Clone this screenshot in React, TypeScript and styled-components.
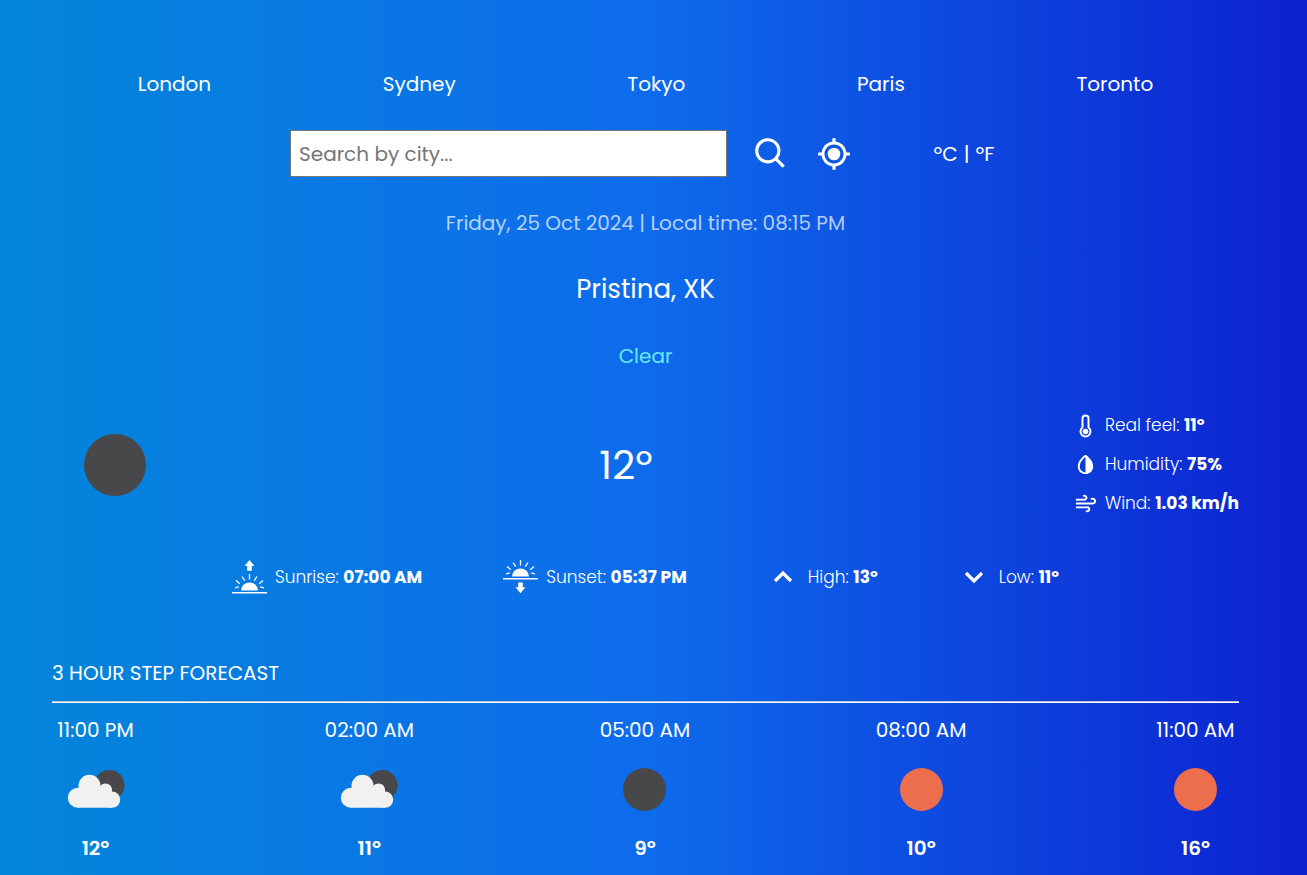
import React from "react";
import styled, { createGlobalStyle } from "styled-components";
import { BiSearch, BiCurrentLocation, BiSolidDropletHalf } from "react-icons/bi";
import { FiWind } from "react-icons/fi";

const GlobalStyle = createGlobalStyle`
  *, *::before, *::after { box-sizing: border-box; }
  html { min-height: 100%; }
  body {
    margin: 0;
    min-height: 100vh;
    background: linear-gradient(to right, #0386da, #0e6bec 50%, #0c21d0);
    color: #fff;
    font-family: Poppins, Inter, "Open Sans", sans-serif;
    font-size: 20px;
    line-height: 30px;
  }
  button, input { font: inherit; color: inherit; }
  h1, h2, p, ul { margin: 0; padding: 0; font-weight: 400; }
`;

const Page = styled.main`
  display: flex;
  flex-direction: column;
  padding: 69px 68px 12px 52px;
`;

const PlainButton = styled.button`
  display: inline-flex;
  align-items: center;
  justify-content: center;
  padding: 0;
  border: 0;
  background: none;
  cursor: pointer;
`;

const CityNav = styled.nav`
  display: flex;
  justify-content: space-around;
`;

const SearchBar = styled.form`
  display: flex;
  align-items: center;
  justify-content: center;
  margin-top: 31px;
`;

const SearchInput = styled.input`
  width: 37%;
  max-width: 437px;
  height: 47px;
  padding: 0 8px;
  border: 1px solid #767676;
  background: #fff;
  color: #222;
  &::placeholder { color: #757575; opacity: 1; }
`;

const SearchActions = styled.div`
  display: flex;
  gap: 25px;
  margin-left: 25px;
`;

const Units = styled.div`
  display: flex;
  align-items: center;
  justify-content: center;
  gap: 6px;
  width: 74px;
  margin-left: 74px;
`;

const DateLine = styled.p`
  margin-top: 31px;
  text-align: center;
  color: rgba(255, 255, 255, 0.7);
`;

const City = styled.h1`
  margin-top: 31px;
  font-size: 26px;
  line-height: 40px;
  text-align: center;
`;

const Condition = styled.p`
  margin-top: 32px;
  text-align: center;
  color: #67e8f9;
`;

const Current = styled.section`
  display: flex;
  align-items: center;
  justify-content: space-between;
  margin-top: 41px;
`;

const IconBox = styled.div`
  display: flex;
  justify-content: center;
  width: 126px;
`;

const Temperature = styled.p`
  font-size: 40px;
  line-height: 60px;
`;

const Details = styled.ul`
  display: flex;
  flex-direction: column;
  gap: 12px;
  list-style: none;
`;

const Stat = styled.li<{ $gap: number }>`
  display: flex;
  align-items: center;
  gap: ${(p) => p.$gap}px;
  font-size: 17px;
  line-height: 27px;
  font-weight: 300;
  white-space: nowrap;
  strong { font-weight: 700; }
`;

const SunStats = styled.ul`
  display: flex;
  align-items: center;
  justify-content: center;
  gap: 81px;
  margin-top: 42px;
  list-style: none;
`;

const ForecastTitle = styled.h2`
  margin-top: 63px;
  font-size: 20px;
  line-height: 30px;
`;

const Rule = styled.hr`
  width: 100%;
  height: 2px;
  margin: 13px 0 12px;
  border: 0;
  border-top: 1px solid #b9c3cd;
  background: #fff;
`;

const Hours = styled.ul`
  display: flex;
  justify-content: space-between;
  list-style: none;
`;

const Hour = styled.li`
  display: flex;
  flex-direction: column;
  align-items: center;
  min-width: 87px;
  white-space: nowrap;
`;

const HourIcon = styled.div`
  display: flex;
  align-items: center;
  height: 88px;
`;

const HourTemp = styled.strong`
  font-weight: 600;
`;

type Sky = "night" | "day" | "cloudyNight";

const SkyIcon = ({ kind, size }: { kind: Sky; size: number }) => {
  if (kind === "cloudyNight") {
    return (
      <svg width="58" height="40" viewBox="0 0 58 40" aria-hidden="true">
        <circle cx="42.3" cy="16.2" r="15.3" fill="#48484a" />
        <g fill="#f1f1f0">
          <circle cx="10.8" cy="28.8" r="10" />
          <circle cx="22.5" cy="16.7" r="11" />
          <circle cx="38.5" cy="21" r="6.6" />
          <circle cx="45" cy="30.6" r="8.2" />
          <path d="M10.8 22H45V38.8H10.8z" />
        </g>
      </svg>
    );
  }
  return (
    <svg width={size} height={size} viewBox="0 0 100 100" aria-hidden="true">
      <circle cx="50" cy="50" r="50" fill={kind === "night" ? "#48484a" : "#ec6e4c"} />
    </svg>
  );
};

const WindIcon = styled(FiWind)`
  stroke-linecap: butt;
`;

const Thermometer = () => (
  <svg width="23" height="24" viewBox="0 0 23 24" fill="none" aria-hidden="true">
    <path d="M8.5 13.5V4.5a3 3 0 0 1 6 0v9a5 5 0 1 1-6 0z" stroke="#fff" strokeWidth="2" />
    <circle cx="11.5" cy="17.5" r="2.8" fill="#fff" />
  </svg>
);

const Sun = ({ rising }: { rising: boolean }) => (
  <svg width="35" height="36" viewBox="0 0 35 36" aria-hidden="true">
    <g transform={rising ? "translate(0 14)" : undefined}>
      <path d="M9 17.5a8.5 8 0 0 1 17 0z" fill="#fff" />
      <path
        d="M17.5 1v5.500M10 3.500l2.800 4.200M25 3.500l-2.800 4.200M4 7.500l3.800 3.200M31 7.500l-3.800 3.200M3 14.800l3.800-1M32 14.800l-3.800-1"
        stroke="#fff"
        strokeWidth="1.3"
      />
      <path d="M0 19.7h35" stroke="#fff" strokeWidth="1.4" />
    </g>
    {rising ? (
      <path d="M17.5 1l5 6h-2.700v4.700h-4.600V7h-2.700z" fill="#fff" />
    ) : (
      <path d="M17.5 34.300l5-6h-2.700v-4.700h-4.600v4.700h-2.700z" fill="#fff" />
    )}
  </svg>
);

const Chevron = ({ up }: { up: boolean }) => (
  <svg width="30" height="20" viewBox="0 0 30 20" fill="none" aria-hidden="true">
    <path d={up ? "M7 14l8-8 8 8" : "M7 6l8 8 8-8"} stroke="#fff" strokeWidth="3.2" />
  </svg>
);

const cities = ["London", "Sydney", "Tokyo", "Paris", "Toronto"];

const hours: { time: string; sky: Sky; temp: string }[] = [
  { time: "11:00 PM", sky: "cloudyNight", temp: "12º" },
  { time: "02:00 AM", sky: "cloudyNight", temp: "11º" },
  { time: "05:00 AM", sky: "night", temp: "9º" },
  { time: "08:00 AM", sky: "day", temp: "10º" },
  { time: "11:00 AM", sky: "day", temp: "16º" },
];

const details = [
  { icon: <Thermometer />, label: "Real feel", value: "11º" },
  { icon: <BiSolidDropletHalf size={23} />, label: "Humidity", value: "75%" },
  { icon: <WindIcon size={23} />, label: "Wind", value: "1.03 km/h" },
];

const sunStats = [
  { icon: <Sun rising />, gap: 8, label: "Sunrise", value: "07:00 AM" },
  { icon: <Sun rising={false} />, gap: 8, label: "Sunset", value: "05:37 PM" },
  { icon: <Chevron up />, gap: 10, label: "High", value: "13º" },
  { icon: <Chevron up={false} />, gap: 10, label: "Low", value: "11º" },
];

export default function App() {
  return (
    <>
      <GlobalStyle />
      <Page>
        <CityNav>
          {cities.map((city) => (
            <PlainButton key={city} type="button">{city}</PlainButton>
          ))}
        </CityNav>

        <SearchBar onSubmit={(e: React.FormEvent) => e.preventDefault()}>
          <SearchInput type="text" placeholder="Search by city..." aria-label="Search by city" />
          <SearchActions>
            <PlainButton type="submit" aria-label="Search"><BiSearch size={38} /></PlainButton>
            <PlainButton type="button" aria-label="Use my location"><BiCurrentLocation size={38} /></PlainButton>
          </SearchActions>
          <Units>
            <PlainButton type="button">ºC</PlainButton>
            <span>|</span>
            <PlainButton type="button">ºF</PlainButton>
          </Units>
        </SearchBar>

        <DateLine>Friday, 25 Oct 2024 | Local time: 08:15 PM</DateLine>
        <City>Pristina, XK</City>
        <Condition>Clear</Condition>

        <Current>
          <IconBox><SkyIcon kind="night" size={62} /></IconBox>
          <Temperature>12º</Temperature>
          <Details>
            {details.map((d) => (
              <Stat key={d.label} $gap={8}>
                {d.icon}
                <span>{d.label}: <strong>{d.value}</strong></span>
              </Stat>
            ))}
          </Details>
        </Current>

        <SunStats>
          {sunStats.map((s) => (
            <Stat key={s.label} $gap={s.gap}>
              {s.icon}
              <span>{s.label}: <strong>{s.value}</strong></span>
            </Stat>
          ))}
        </SunStats>

        <ForecastTitle>3 HOUR STEP FORECAST</ForecastTitle>
        <Rule />
        <Hours>
          {hours.map((h) => (
            <Hour key={h.time}>
              <span>{h.time}</span>
              <HourIcon><SkyIcon kind={h.sky} size={43} /></HourIcon>
              <HourTemp>{h.temp}</HourTemp>
            </Hour>
          ))}
        </Hours>
      </Page>
    </>
  );
}
